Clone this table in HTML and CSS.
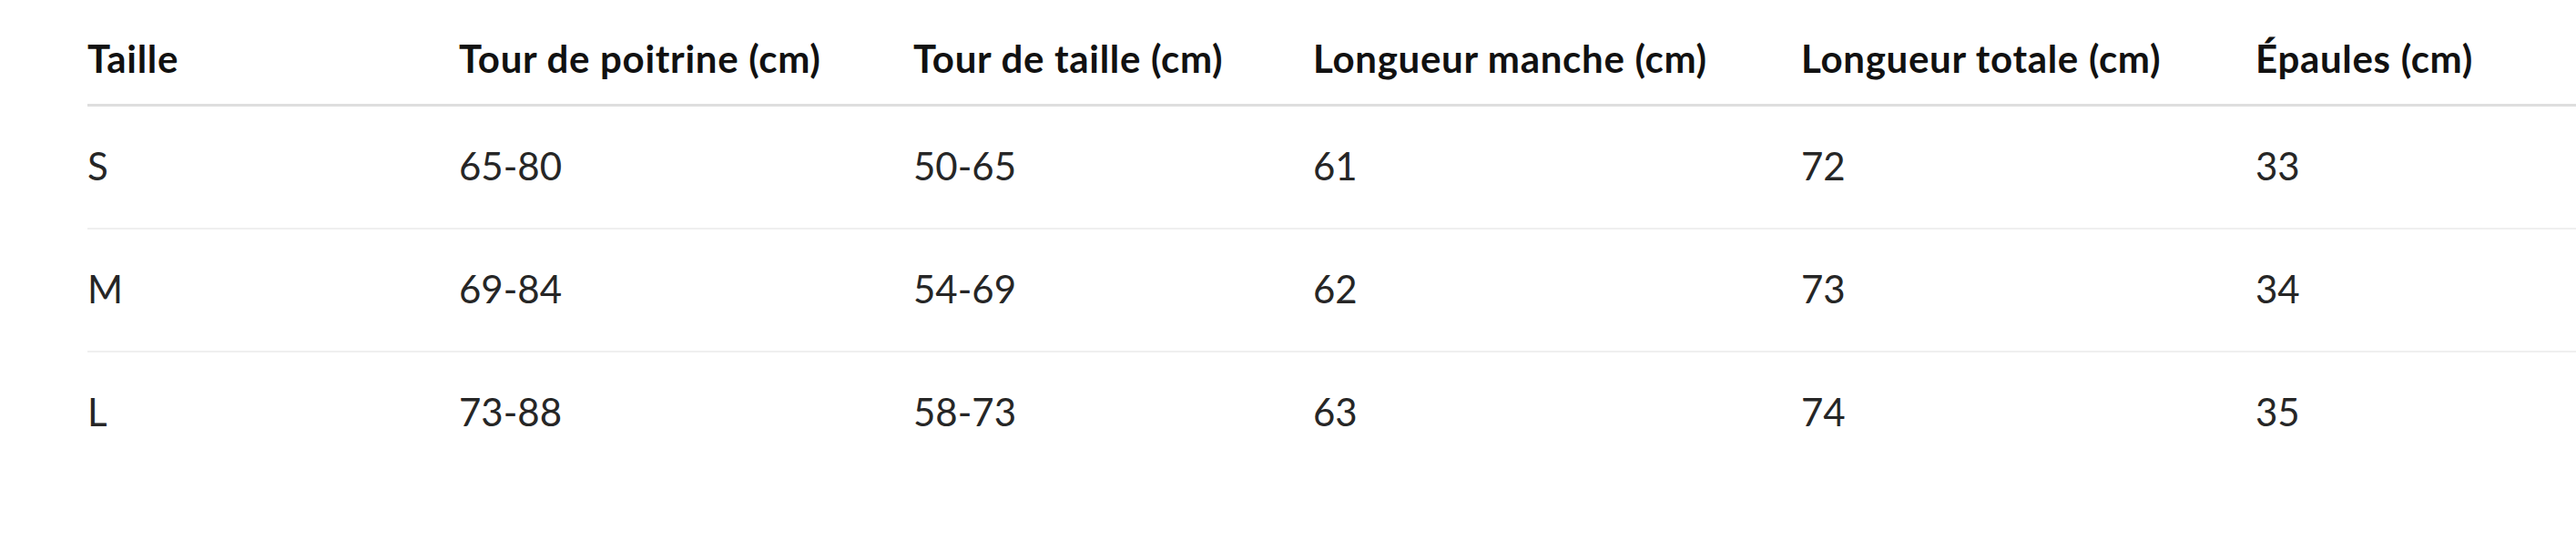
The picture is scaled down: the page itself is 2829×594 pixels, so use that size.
FILE: index.html
```html
<!DOCTYPE html>
<html lang="fr">
<head>
<meta charset="utf-8">
<title>Guide des tailles</title>
<link rel="stylesheet" href="styles.css">
</head>
<body>
<div class="wrap">
  <table class="sizes">
    <colgroup>
      <col class="c1"><col class="c2"><col class="c3"><col class="c4"><col class="c5"><col class="c6">
    </colgroup>
    <thead>
      <tr>
        <th>Taille</th>
        <th>Tour de poitrine (cm)</th>
        <th>Tour de taille (cm)</th>
        <th>Longueur manche (cm)</th>
        <th>Longueur totale (cm)</th>
        <th>Épaules (cm)</th>
      </tr>
    </thead>
    <tbody>
      <tr><td>S</td><td>65-80</td><td>50-65</td><td>61</td><td>72</td><td>33</td></tr>
      <tr><td>M</td><td>69-84</td><td>54-69</td><td>62</td><td>73</td><td>34</td></tr>
      <tr><td>L</td><td>73-88</td><td>58-73</td><td>63</td><td>74</td><td>35</td></tr>
    </tbody>
  </table>
</div>
</body>
</html>
```

FILE: styles.css
```css
html, body {
  margin: 0;
  padding: 0;
  background: #ffffff;
}

body {
  font-family: "Lato", "Open Sans", sans-serif;
  font-size: 42px;
  color: #222222;
  overflow: hidden;
}

.wrap {
  padding: 15px 0 0 96px;
}

.sizes {
  width: 2733px;
  border-collapse: collapse;
  table-layout: fixed;
}

.c1 { width: 408px; }
.c2 { width: 499px; }
.c3 { width: 439px; }
.c4 { width: 536px; }
.c5 { width: 499px; }
.c6 { width: 352px; }

.sizes th,
.sizes td {
  text-align: left;
  padding-left: 0;
  padding-right: 0;
  line-height: 50px;
  white-space: nowrap;
}

.sizes th {
  font-weight: 700;
  color: #111111;
  letter-spacing: 0.7px;
  padding-top: 24px;
  padding-bottom: 25px;
  border-bottom: 3px solid #dedede;
}

.sizes td {
  font-weight: 400;
  color: #262626;
  padding-top: 40px;
  padding-bottom: 43px;
  border-bottom: 2px solid #efefef;
}

.sizes tbody tr:last-child td {
  border-bottom: none;
}
```
